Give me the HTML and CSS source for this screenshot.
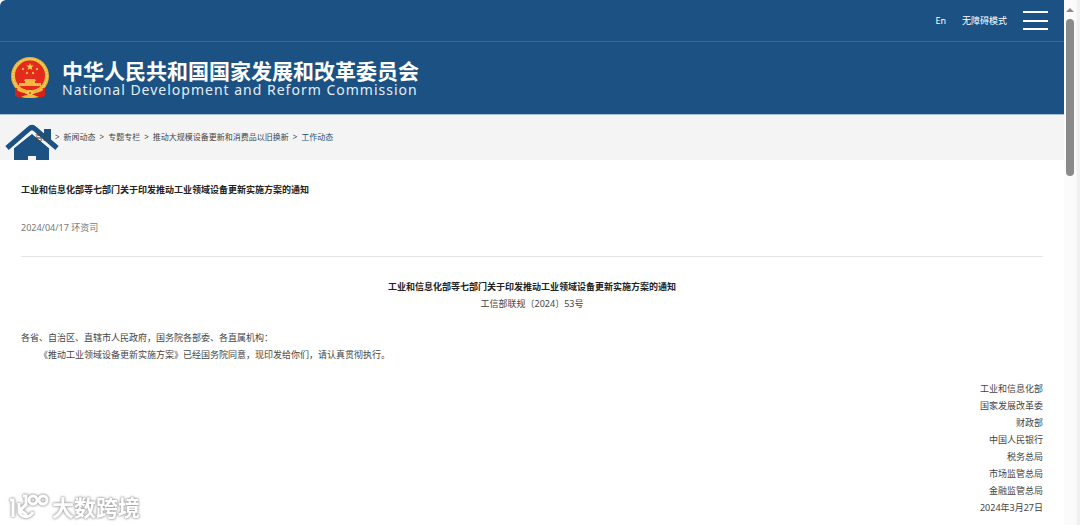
FILE: index.html
```html
<!DOCTYPE html>
<html lang="zh-CN">
<head>
<meta charset="utf-8">
<meta name="viewport" content="width=device-width, initial-scale=1">
<title>工业和信息化部等七部门关于印发推动工业领域设备更新实施方案的通知</title>
<link rel="stylesheet" href="styles.css">
</head>
<body>
<div class="window">
  <div class="page">
    <header class="header">
      <div class="topbar">
        <a class="top-link" href="#">En</a>
        <a class="top-link" href="#">无障碍模式</a>
        <button class="menu" type="button" aria-label="菜单"><span></span><span></span><span></span></button>
      </div>
      <div class="brand">
        <svg class="emblem" viewBox="0 0 40 42" aria-hidden="true">
          <path d="M6 28h28l1 5-2 7-8 1-5-2-5 2-8-1-2-7z" fill="#d5201c"/>
          <circle cx="20" cy="19" r="19" fill="#e9b23c"/>
          <circle cx="20" cy="19" r="17" fill="none" stroke="#f6d366" stroke-width="1.500" stroke-dasharray="2 1"/>
          <circle cx="20" cy="18.500" r="15" fill="#e32a1c"/>
          <path d="M20 6l1 2.600h2.800l-2.200 1.700.8 2.700-2.400-1.600-2.400 1.600.8-2.700-2.200-1.700H19z" fill="#f8ce4e"/>
          <g fill="#f3b743">
            <circle cx="13" cy="12" r="1.200"/><circle cx="27" cy="12" r="1.200"/>
            <circle cx="17" cy="16" r="1.200"/><circle cx="23" cy="16" r="1.200"/>
            <path d="M15 22h10l1 2h-1v2h6v3H9v-3h6v-2h-1z"/>
          </g>
          <path d="M5 31c5 0 8 1 11 4h8c3-3 6-4 11-4v8l-6 1-4-2-5 1-5-1-4 2-6-1z" fill="#d5201c"/>
          <path d="M8 29c4 4 8 3 10 5h4c2-2 6-1 10-5l1 4c-3 3-7 2-9 4H16c-2-2-6-1-9-4z" fill="#efb83c"/>
          <circle cx="20" cy="36" r="3" fill="#f5c84b"/>
          <circle cx="20" cy="36" r="1.200" fill="#c9761f"/>
          <path d="M11 40l5-2h8l5 2-5 1h-8z" fill="#efb83c"/>
        </svg>
        <div class="brand-text">
          <div class="brand-cn">中华人民共和国国家发展和改革委员会</div>
          <div class="brand-en">National Development and Reform Commission</div>
        </div>
      </div>
    </header>
    <nav class="crumbs" aria-label="当前位置">
      <svg class="home" viewBox="0 0 54 36" aria-hidden="true">
        <path d="M9 36V24L27 10l17 14v12H31v-4h-8v4z" fill="#1b5283"/>
        <path d="M2 25L27 4l24 21" fill="none" stroke="#f4f4f4" stroke-width="8"/>
        <path d="M39 5h7v15l-7-6z" fill="#1b5283"/>
        <path d="M2 24L24 5q3-3 6 0l22 19" fill="none" stroke="#1b5283" stroke-width="5"/>
      </svg>
      <ol class="crumb-list">
        <li><a href="#">首页</a></li>
        <li><a href="#">新闻动态</a></li>
        <li><a href="#">专题专栏</a></li>
        <li><a href="#">推动大规模设备更新和消费品以旧换新</a></li>
        <li><a class="current" href="#">工作动态</a></li>
      </ol>
    </nav>
    <main class="article">
      <div class="article-head">
        <h1>工业和信息化部等七部门关于印发推动工业领域设备更新实施方案的通知</h1>
        <p class="meta">2024/04/17 环资司</p>
      </div>
      <h2>工业和信息化部等七部门关于印发推动工业领域设备更新实施方案的通知</h2>
      <p class="number">工信部联规〔2024〕53号</p>
      <p>各省、自治区、直辖市人民政府，国务院各部委、各直属机构：</p>
      <p class="indent">《推动工业领域设备更新实施方案》已经国务院同意，现印发给你们，请认真贯彻执行。</p>
      <div class="signature">
        <p>工业和信息化部</p>
        <p>国家发展改革委</p>
        <p>财政部</p>
        <p>中国人民银行</p>
        <p>税务总局</p>
        <p>市场监管总局</p>
        <p>金融监管总局</p>
        <p>2024年3月27日</p>
      </div>
    </main>
  </div>
  <div class="scrollbar" aria-hidden="true"><span class="arrow"></span><span class="thumb"></span></div>
</div>
<div class="watermark">
  <svg viewBox="0 0 40 28" aria-hidden="true">
    <g fill="none" stroke="#fff" stroke-width="3">
      <path d="M1 8h3v17M10 11v6M18 12l-7 6 7 5M10 17c0 9 10 10 14 3"/>
      <path d="M14 4h3v9"/>
      <circle cx="24" cy="8" r="4"/><circle cx="34" cy="8" r="4"/>
    </g>
  </svg>
  <span>大数跨境</span>
</div>
</body>
</html>
```
FILE: styles.css
```css
* { box-sizing: border-box; }

body {
  margin: 0;
  overflow: hidden;
  background: #fff;
  color: #444;
  font: 9px/17px "Noto Sans", "Noto Sans CJK SC", sans-serif;
}

h1, h2, p, ol { margin: 0; padding: 0; }
h1, h2 { font-size: 9px; line-height: 17px; font-weight: 700; color: #222; }
a { color: inherit; text-decoration: none; }

.window { display: flex; min-height: 100vh; }
.page { flex: 1; min-width: 0; }

.header {
  background: #1b5283;
  color: #fff;
  border-top-left-radius: 6px;
  border-bottom: 1px solid #a5c1d8;
}
.topbar {
  display: flex;
  align-items: center;
  justify-content: flex-end;
  gap: 16px;
  height: 42px;
  padding-right: 16px;
  border-bottom: 1px solid #37699a;
}
.menu {
  display: flex;
  flex-direction: column;
  justify-content: space-between;
  width: 25px;
  height: 19px;
  padding: 0;
  border: 0;
  background: none;
}
.menu span { height: 2px; background: #fff; }

.brand { display: flex; align-items: center; gap: 12px; height: 72px; padding-left: 10px; }
.emblem { width: 40px; height: 42px; }
.brand-text { padding-top: 2px; }
.brand-cn { font: 700 21px/22px "Noto Sans CJK SC", sans-serif; white-space: nowrap; }
.brand-en { font-size: 14px; line-height: 18px; letter-spacing: 1px; color: #e3edf6; white-space: nowrap; }

.crumbs {
  position: relative;
  height: 45px;
  padding: 13px 0 0 35px;
  background: #f4f4f4;
  font-size: 8px;
}
.home { position: absolute; left: 5px; bottom: 0; width: 54px; height: 36px; }
.crumb-list { position: relative; display: flex; list-style: none; white-space: nowrap; }
.crumb-list li + li::before { content: ">"; margin: 0 4px; }
.crumb-list .current { color: #1b5283; }

.article { padding: 21px 21px 8px; }
.article-head { padding-bottom: 20px; margin-bottom: 21px; border-bottom: 1px solid #e6e6e6; }
.meta { margin-top: 21px; color: #777; }
h2, .number { text-align: center; }
.number { margin-bottom: 17px; }
.indent { text-indent: 2em; }
.signature { margin-top: 17px; text-align: right; }

.scrollbar {
  display: flex;
  flex-direction: column;
  align-items: center;
  gap: 7px;
  width: 16px;
  padding: 8px 4px 0 0;
  background: linear-gradient(to right, #fbfbfb 12px, #f1f1f1 13px);
}
.arrow { border: 4px solid transparent; border-top: 0; border-bottom-color: #8a8a8a; }
.thumb { width: 8px; height: 157px; border-radius: 4px; background: #8a8a8a; }

.watermark {
  position: absolute;
  left: 9px;
  bottom: 5px;
  display: flex;
  align-items: center;
  gap: 3px;
  color: #fff;
  font: 700 22px/28px "Noto Sans CJK SC", sans-serif;
  filter: drop-shadow(0 0 1px #999) drop-shadow(0 0 1px #bbb);
}
.watermark svg { width: 40px; height: 28px; }
```
